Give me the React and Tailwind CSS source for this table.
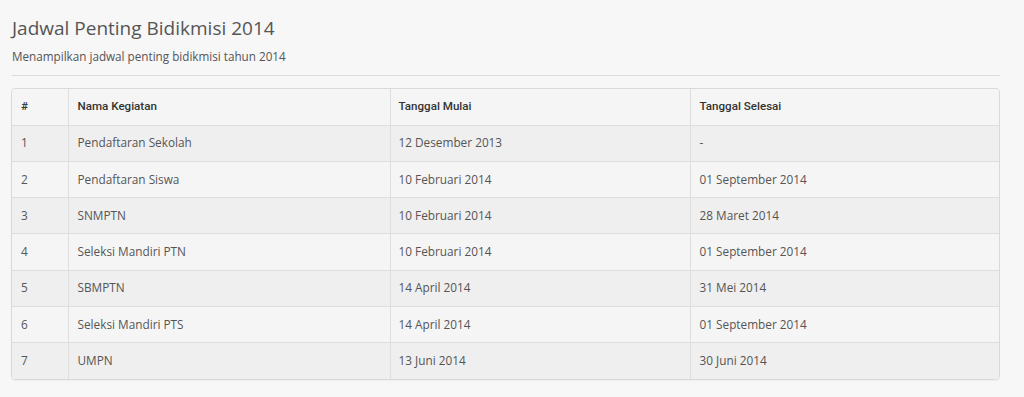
import React from "react";

const rows = [
  ["1", "Pendaftaran Sekolah", "12 Desember 2013", "-"],
  ["2", "Pendaftaran Siswa", "10 Februari 2014", "01 September 2014"],
  ["3", "SNMPTN", "10 Februari 2014", "28 Maret 2014"],
  ["4", "Seleksi Mandiri PTN", "10 Februari 2014", "01 September 2014"],
  ["5", "SBMPTN", "14 April 2014", "31 Mei 2014"],
  ["6", "Seleksi Mandiri PTS", "14 April 2014", "01 September 2014"],
  ["7", "UMPN", "13 Juni 2014", "30 Juni 2014"],
];

const App = () => {
  return (
    <div className="min-h-[397px] bg-[#f7f7f7] pl-[11px] pr-[24px] pt-[14px] font-['Open_Sans',sans-serif] text-[#555]">
      <h1 className="pl-[1px] text-[19px] leading-[28px] text-[#555]">
        Jadwal Penting Bidikmisi 2014
      </h1>
      <p className="mt-[6px] pl-[1px] text-[11.7px] leading-[16px] text-[#555]">
        Menampilkan jadwal penting bidikmisi tahun 2014
      </p>
      <hr className="mt-[11px] ml-[1px] border-t border-[#dcdcdc]" />
      <div className="mt-[12px] overflow-hidden rounded-[4px] border border-[#d9d9d9] shadow-[0_1px_1px_rgba(0,0,0,0.04)]">
        <table className="w-full border-collapse text-[11.8px]">
          <thead>
            <tr className="h-[36px] bg-[#f5f5f5] font-['Roboto',sans-serif] text-[11.6px] font-medium text-[#333]">
              <th className="w-[56px] border-b border-r border-[#dedede] pl-[9px] text-left font-medium">#</th>
              <th className="w-[322px] border-b border-r border-[#dedede] pl-[9px] text-left font-medium">Nama Kegiatan</th>
              <th className="w-[300px] border-b border-r border-[#dedede] pl-[8px] text-left font-medium">Tanggal Mulai</th>
              <th className="border-b border-[#dedede] pl-[9px] text-left font-medium">Tanggal Selesai</th>
            </tr>
          </thead>
          <tbody>
            {rows.map((r, i) => (
              <tr
                key={r[0]}
                className={`h-[36.3px] ${i % 2 === 0 ? "bg-[#efefef]" : "bg-[#f5f5f5]"}`}
              >
                <td className={`border-r border-[#dedede] pl-[9px] ${i < rows.length - 1 ? "border-b" : ""}`}>{r[0]}</td>
                <td className={`border-r border-[#dedede] pl-[9px] ${i < rows.length - 1 ? "border-b" : ""}`}>{r[1]}</td>
                <td className={`border-r border-[#dedede] pl-[8px] ${i < rows.length - 1 ? "border-b" : ""}`}>{r[2]}</td>
                <td className={`border-[#dedede] pl-[9px] ${i < rows.length - 1 ? "border-b" : ""}`}>{r[3]}</td>
              </tr>
            ))}
          </tbody>
        </table>
      </div>
    </div>
  );
};

export default App;
